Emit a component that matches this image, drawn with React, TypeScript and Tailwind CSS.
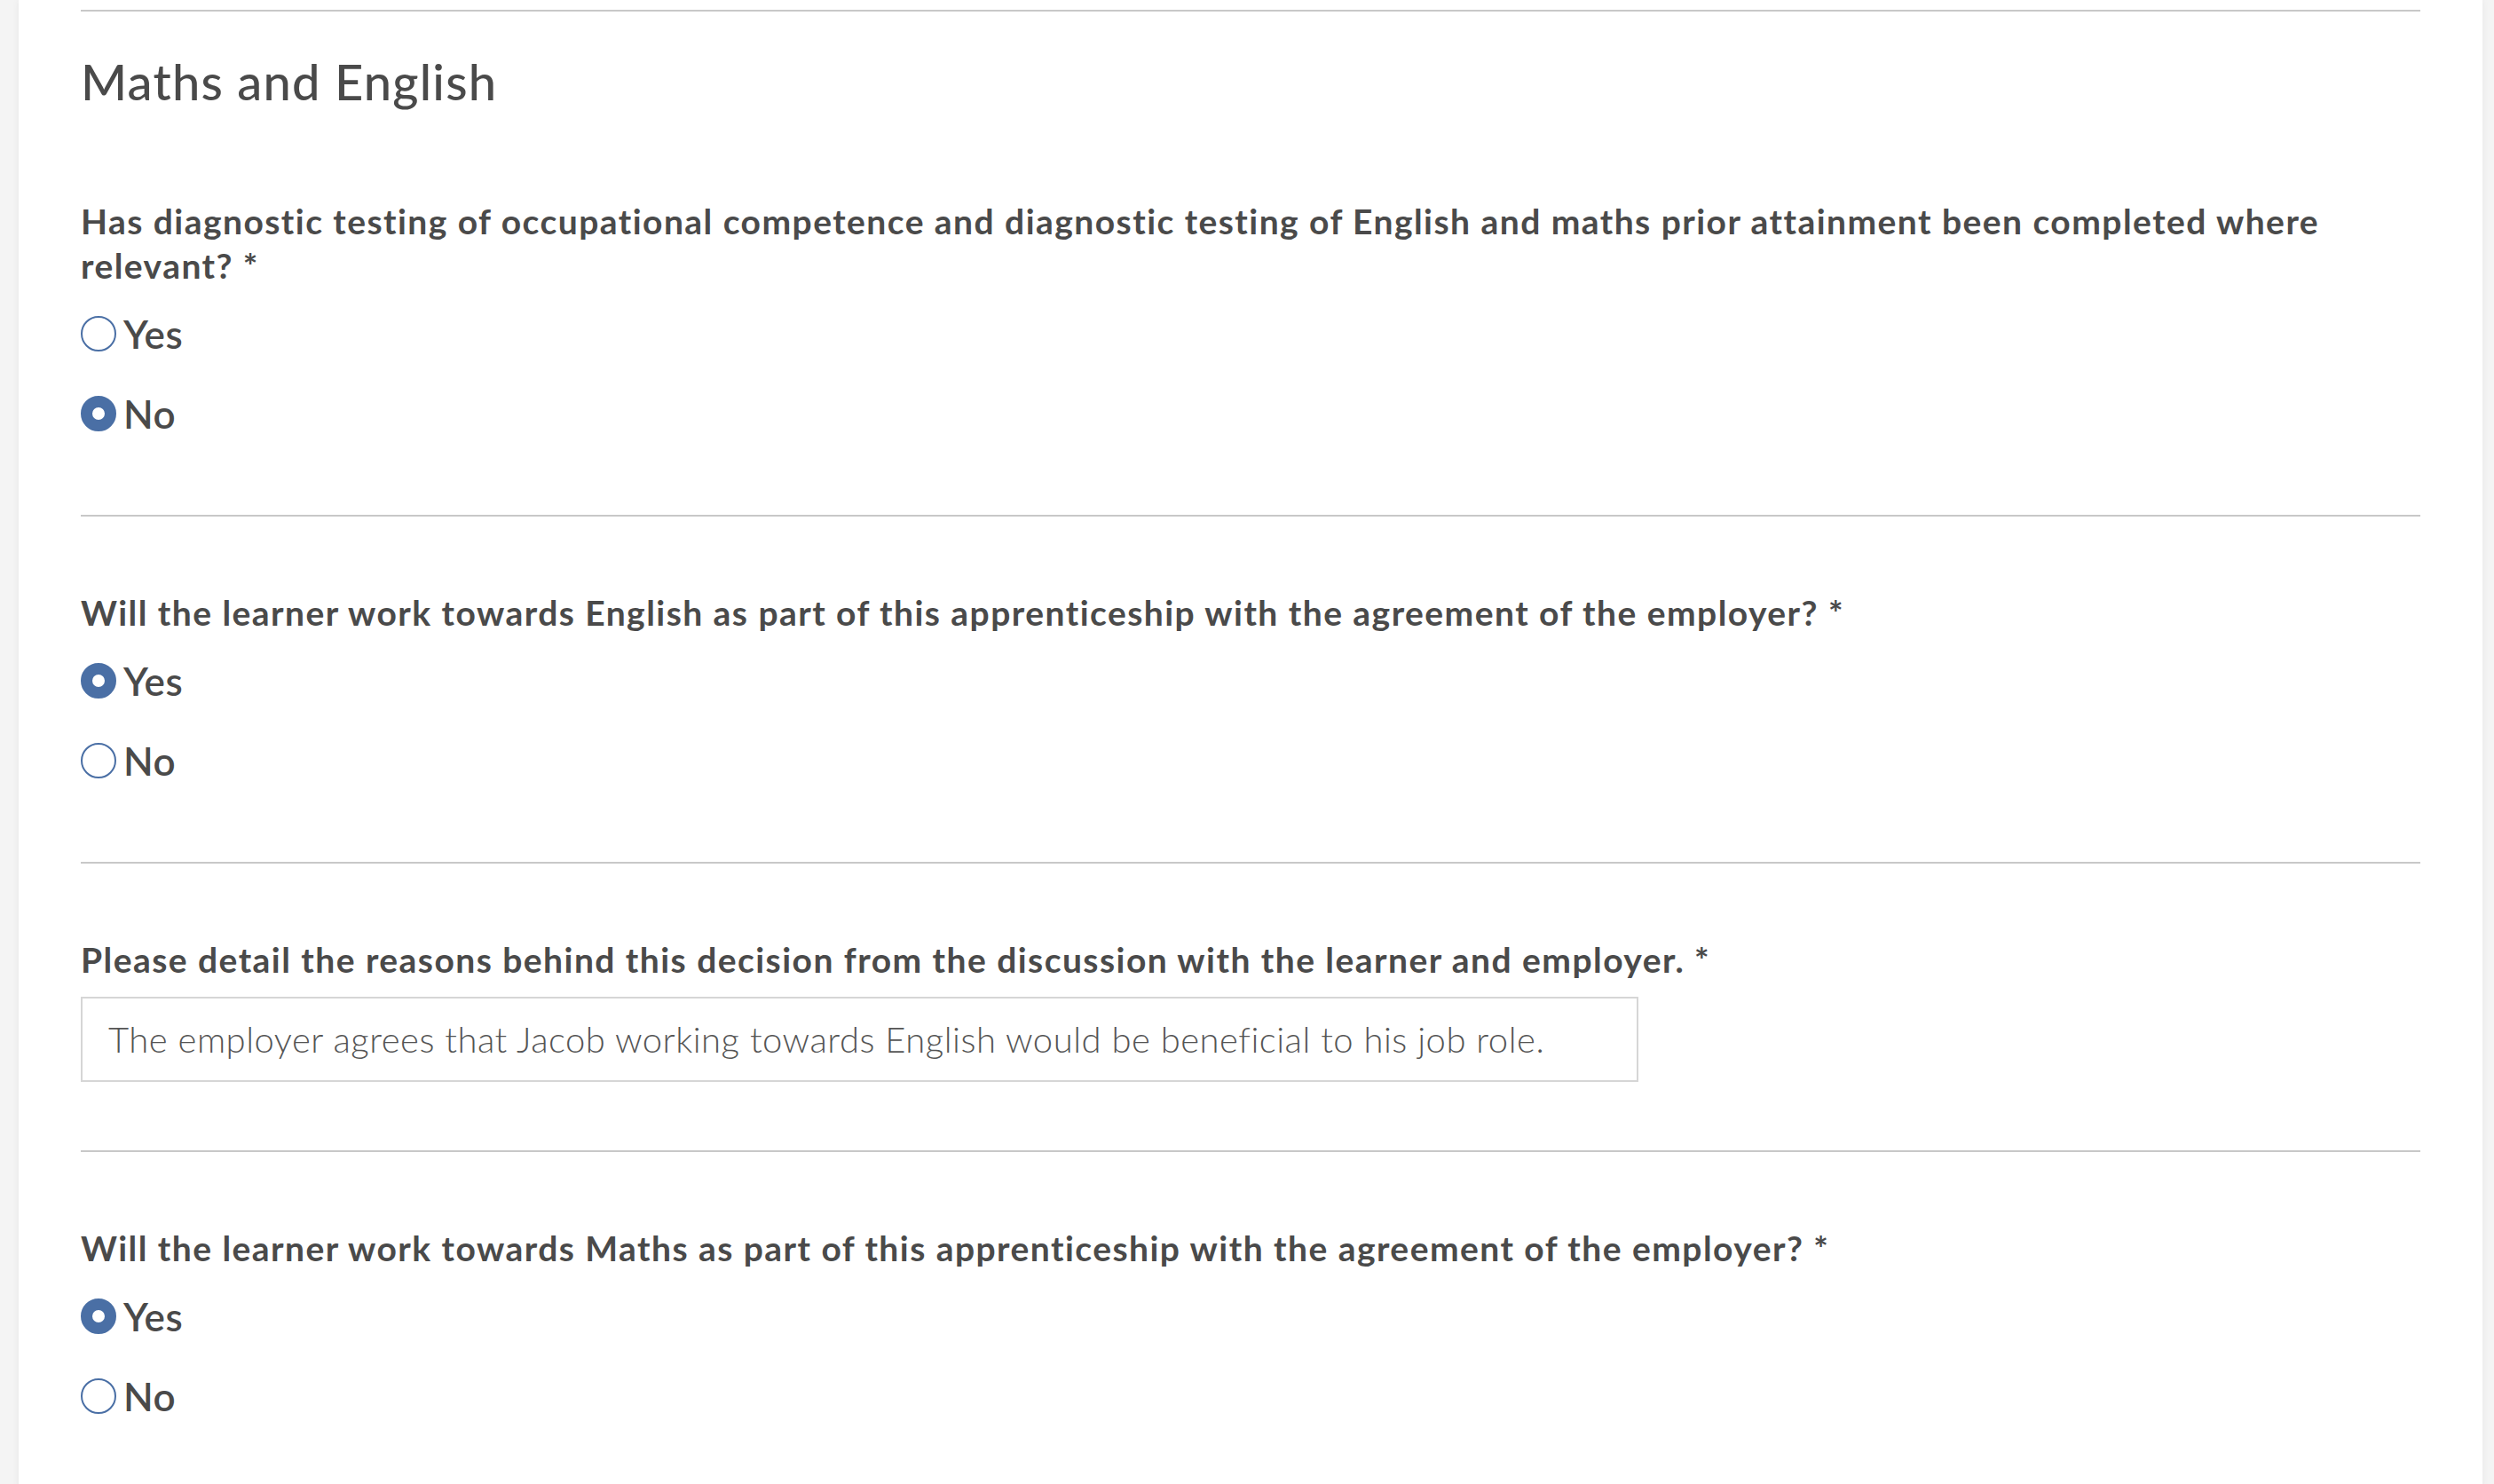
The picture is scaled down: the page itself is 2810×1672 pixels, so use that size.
import React from 'react';

type Option = { label: string; checked: boolean };

const font = { fontFamily: 'Lato, "Noto Sans", "Liberation Sans", sans-serif' };

function Radio({ label, checked }: Option) {
  return (
    <label className="flex h-[50px] items-center gap-[8px] cursor-pointer">
      <span
        className={
          checked
            ? 'box-border h-[40px] w-[40px] shrink-0 rounded-full border-[13px] border-[#4a6fa5] bg-white'
            : 'box-border h-[40px] w-[40px] shrink-0 rounded-full border-2 border-[#4a6fa5] bg-white'
        }
      />
      <span className="text-[44px] font-semibold leading-[50px] tracking-[0.5px] text-[#4a4a4a]">{label}</span>
    </label>
  );
}

function Question({ children }: { children: React.ReactNode }) {
  return <p className="text-[39px] font-bold leading-[50px] tracking-[1.45px] text-[#4a4a4a]">{children}</p>;
}

function RadioQuestion({ question, options }: { question: string; options: Option[] }) {
  return (
    <div>
      <Question>{question}</Question>
      <div className="mt-[27px] flex flex-col gap-[40px]">
        {options.map((o) => (
          <Radio key={o.label} {...o} />
        ))}
      </div>
    </div>
  );
}

export default function App() {
  return (
    <div className="flex min-h-screen bg-[#f4f4f4]" style={font}>
      <div className="ml-[21px] mr-[13px] flex-1 bg-white px-[70px] pt-[11px] pb-[80px] shadow-[0_0_8px_rgba(0,0,0,0.06)]">
        <div className="border-t-2 border-[#c8c8c8]" />

        <h2 className="mt-[45px] text-[56px] font-medium leading-[67px] tracking-[1.2px] text-[#4a4a4a]">
          Maths and English
        </h2>

        <section className="mt-[99px] border-b-2 border-[#c8c8c8] pb-[89px]">
          <RadioQuestion
            question="Has diagnostic testing of occupational competence and diagnostic testing of English and maths prior attainment been completed where relevant? *"
            options={[
              { label: 'Yes', checked: false },
              { label: 'No', checked: true },
            ]}
          />
        </section>

        <section className="border-b-2 border-[#c8c8c8] pt-[83px] pb-[89px]">
          <RadioQuestion
            question="Will the learner work towards English as part of this apprenticeship with the agreement of the employer? *"
            options={[
              { label: 'Yes', checked: true },
              { label: 'No', checked: false },
            ]}
          />
        </section>

        <section className="border-b-2 border-[#c8c8c8] pt-[83px] pb-[77px]">
          <Question>
            Please detail the reasons behind this decision from the discussion with the learner and employer. *
          </Question>
          <div className="mt-[17px] flex h-[96px] w-[1755px] items-center border-2 border-[#d6d6d6] px-[29px]">
            <span className="text-[40px] font-light tracking-[0.5px] text-[#555555]">
              The employer agrees that Jacob working towards English would be beneficial to his job role.
            </span>
          </div>
        </section>

        <section className="pt-[83px]">
          <RadioQuestion
            question="Will the learner work towards Maths as part of this apprenticeship with the agreement of the employer? *"
            options={[
              { label: 'Yes', checked: true },
              { label: 'No', checked: false },
            ]}
          />
        </section>
      </div>
    </div>
  );
}
